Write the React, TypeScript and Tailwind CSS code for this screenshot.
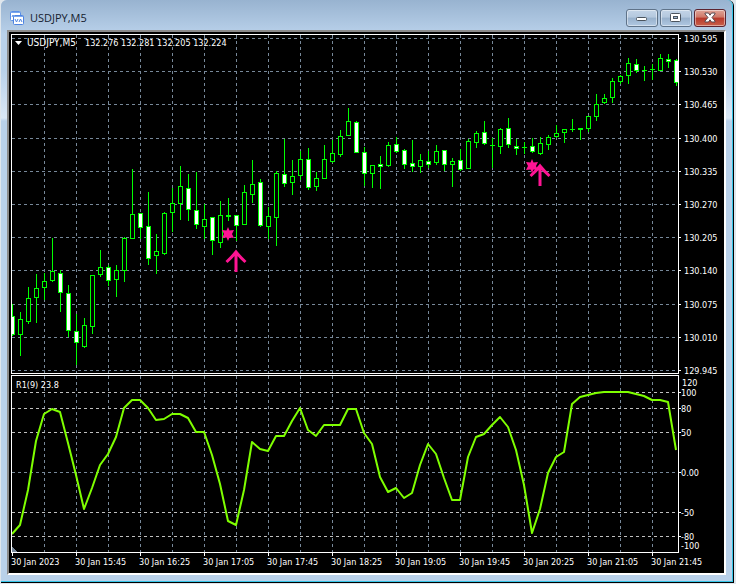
import React from "react"

// [high, low, bodyTop, bodyBottom, bearish]
type Candle = [number, number, number, number, number]

const CANDLES: Candle[] = [
    [304, 336, 316, 335, 1], [312, 356, 319, 335, 0], [287, 324, 298, 322, 0], [274, 323, 288, 298, 0],
    [273, 300, 281, 288, 0], [238, 282, 271, 281, 0], [270, 312, 273, 293, 1], [285, 337, 293, 331, 1],
    [314, 365, 331, 343, 1], [318, 348, 325, 347, 0], [275, 334, 275, 327, 0], [250, 277, 267, 275, 0],
    [265, 286, 267, 281, 1], [265, 297, 270, 280, 0], [237, 282, 238, 271, 0], [169, 239, 214, 239, 0],
    [213, 239, 213, 228, 1], [192, 265, 226, 259, 1], [234, 274, 251, 256, 0], [212, 255, 213, 254, 0],
    [188, 232, 203, 213, 0], [166, 220, 186, 204, 0], [174, 221, 188, 210, 1], [172, 229, 210, 225, 1],
    [204, 239, 219, 227, 0], [217, 255, 217, 241, 1], [201, 248, 215, 243, 0], [198, 221, 215, 217, 0],
    [215, 241, 215, 226, 1], [185, 225, 192, 225, 0], [160, 203, 184, 195, 0], [179, 227, 182, 226, 1],
    [207, 239, 216, 227, 0], [171, 246, 173, 218, 0], [139, 187, 174, 184, 1], [160, 195, 176, 183, 0],
    [151, 180, 159, 176, 0], [148, 190, 159, 188, 1], [172, 191, 178, 187, 0], [145, 179, 159, 179, 0],
    [140, 163, 153, 162, 0], [130, 157, 136, 155, 0], [108, 136, 121, 136, 0], [121, 153, 122, 153, 1],
    [147, 186, 152, 174, 1], [165, 188, 165, 174, 0], [156, 189, 164, 167, 1], [142, 167, 145, 166, 0],
    [137, 153, 144, 152, 1], [149, 169, 150, 165, 1], [140, 172, 163, 167, 1], [154, 173, 160, 167, 0],
    [151, 168, 161, 165, 1], [145, 165, 151, 163, 0], [150, 171, 150, 165, 1], [158, 187, 161, 165, 0],
    [149, 171, 160, 170, 1], [139, 169, 141, 169, 0], [131, 148, 133, 143, 0], [121, 145, 132, 144, 1],
    [138, 168, 145, 146, 0], [128, 154, 129, 147, 0], [118, 148, 128, 145, 1], [139, 155, 146, 149, 1],
    [142, 154, 147, 148, 0], [138, 153, 146, 152, 1], [137, 155, 143, 154, 0], [135, 150, 137, 145, 0],
    [125, 138, 133, 137, 0], [129, 143, 129, 133, 0], [119, 132, 129, 130, 0], [128, 140, 128, 130, 0],
    [116, 132, 116, 129, 0], [94, 121, 104, 117, 0], [94, 104, 98, 103, 0], [78, 103, 81, 98, 0],
    [75, 84, 76, 82, 0], [58, 84, 63, 76, 0], [59, 73, 64, 71, 1], [66, 81, 70, 71, 0],
    [64, 80, 69, 70, 0], [54, 71, 58, 71, 0], [54, 68, 59, 62, 1], [59, 86, 60, 83, 1],
]

const INDICATOR = [
    534, 525, 490, 441, 414, 409, 412, 443, 475, 509, 488, 465, 454, 437, 408, 400, 400, 408, 420, 419, 414,
    414, 418, 432, 432, 455, 484, 521, 525, 490, 442, 449, 451, 436, 436, 421, 408, 430, 436, 425, 425, 425,
    409, 409, 433, 444, 477, 492, 488, 498, 493, 465, 444, 454, 478, 500, 500, 457, 437, 434, 425, 417, 427,
    450, 485, 533, 509, 473, 457, 452, 404, 397, 395, 393, 392, 392, 392, 392, 394, 396, 400, 400, 402, 450,
]

const PRICES = [
    { y: 38, label: "130.595" },
    { y: 71, label: "130.530" },
    { y: 104, label: "130.465" },
    { y: 138, label: "130.400" },
    { y: 171, label: "130.335" },
    { y: 204, label: "130.270" },
    { y: 237, label: "130.205" },
    { y: 270, label: "130.140" },
    { y: 304, label: "130.075" },
    { y: 337, label: "130.010" },
    { y: 370, label: "129.945" },
]

const LEVELS = [
    { y: 392, label: "100" },
    { y: 408, label: "80" },
    { y: 432, label: "50" },
    { y: 472, label: "0.00" },
    { y: 512, label: "-50" },
    { y: 536, label: "-80" },
]

const TIMES = [
    "30 Jan 2023", "30 Jan 15:45", "30 Jan 16:25", "30 Jan 17:05", "30 Jan 17:45", "30 Jan 18:25",
    "30 Jan 19:05", "30 Jan 19:45", "30 Jan 20:25", "30 Jan 21:05", "30 Jan 21:45",
]

const COLUMNS = Array.from({ length: 20 }, (_, i) => 44 + i * 32)

const barX = (i: number) => 12 + i * 8

const labelClass = "fill-white text-[9px] font-['DejaVu_Sans_Condensed','DejaVu_Sans',sans-serif]"

export default function App() {
    return (
        <div className="bg-[#dfe6ec] pl-px pr-0.5 pb-px font-['Open_Sans',sans-serif]">
            <main className="rounded-t-md border-r border-b border-black bg-[#b9d1ea]">
                <div className="rounded-t-md border-r border-b border-[#35c5e8] bg-[linear-gradient(180deg,#98b3d0_0px,#b9d1ea_34px,#b9d1ea_70px,#dbe8f6_118px,#b9d1ea_121px)] pl-1.5 pr-1.5 pb-1.5">
                    <TitleBar />
                    <div className="border-2 border-t-[#8b8b8b] border-l-[#8b8b8b] border-r-white border-b-white bg-black">
                        <PriceChart />
                        <IndicatorChart />
                    </div>
                </div>
            </main>
        </div>
    )
}

function TitleBar() {
    return (
        <header className="flex h-[30px] items-center justify-between pt-1.5">
            <div className="flex items-center gap-1.5 pl-[3px]">
                <ChartIcon />
                <h1 className="text-[11px] leading-4 text-[#15202e]">USDJPY,M5</h1>
            </div>
            <div className="flex gap-0.5">
                <WindowButton label="Minimize">
                    <rect x="10.5" y="8.5" width="10" height="3" rx="1" fill="#fff" stroke="#4b545e" />
                </WindowButton>
                <WindowButton label="Maximize">
                    <rect x="10.5" y="4.5" width="10" height="8" rx="1" fill="#fff" stroke="#4b545e" />
                    <rect x="13.5" y="7.5" width="4" height="2" fill="#9fb6d0" stroke="#4b545e" />
                </WindowButton>
                <WindowButton label="Close" danger>
                    <path d="M11 4h3.500l1.500 2.200 1.500-2.200h3.500v1l-3 3.500 3 3.500v1h-3.500l-1.500-2.200-1.500 2.200h-3.500v-1l3-3.500-3-3.500z" fill="#fff" stroke="#5a4a50" />
                </WindowButton>
            </div>
        </header>
    )
}

interface WindowButtonProps {
    label: string
    danger?: boolean
    children: React.ReactNode
}

function WindowButton({ label, danger, children }: WindowButtonProps) {
    const tone = danger
        ? "border-[#5c2430] bg-[linear-gradient(180deg,#e0a598_0%,#cf7767_45%,#b8382a_50%,#c9604a_100%)]"
        : "border-[#5f7389] bg-[linear-gradient(180deg,#c3d4e7_0%,#b4c8de_45%,#98b1cc_50%,#b0c8e2_100%)]"
    return (
        <button
            type="button"
            aria-label={label}
            className={`h-[18px] w-8 rounded-[3px] border shadow-[inset_0_0_0_1px_rgba(255,255,255,0.45)] ${tone}`}
        >
            <svg viewBox="1 1 30 16" className="block h-4 w-[30px]">
                {children}
            </svg>
        </button>
    )
}

function ChartIcon() {
    return (
        <svg viewBox="0 0 14 14" className="h-3.5 w-3.5" fill="none">
            <rect x=".5" y=".5" width="10" height="9" rx="1" fill="#fff" stroke="#5a8fe6" />
            <path d="M1 1.500h9" stroke="#79a6ee" />
            <path d="M2 6l1-2 1 2" stroke="#5a8fe6" />
            <rect x="3.500" y="4.500" width="10" height="9" rx="1" fill="#fff" stroke="#4d83e0" />
            <path d="M4 5.500h9" stroke="#79a6ee" />
            <path d="M5 8l1.500 3 1.500-3M9 11l1.500-3 1.500 3" stroke="#4d83e0" />
        </svg>
    )
}

function PriceChart() {
    return (
        <svg viewBox="9 32 715 342" className="block w-full overflow-visible" role="img" aria-label="USDJPY,M5 price">
            <g shapeRendering="crispEdges">
                <g stroke="#778899" strokeDasharray="3 3">
                    {PRICES.map(({ y }) => (
                        <path key={y} d={`M12 ${y + 0.5}H678`} />
                    ))}
                    {COLUMNS.map((x) => (
                        <path key={x} d={`M${x + 0.5} 35V373`} />
                    ))}
                </g>
                {CANDLES.map((candle, i) => (
                    <CandleBar key={i} x={barX(i)} candle={candle} />
                ))}
                <rect x="9" y="35" width="2" height="338" fill="#000" />
                <rect x="679" y="35" width="3" height="338" fill="#000" />
                <path d="M11.500 34.500H678.500V373.500H11.500z" fill="none" stroke="#fff" />
                {PRICES.map(({ y }) => (
                    <path key={y} d={`M679 ${y + 0.5}h2`} stroke="#fff" />
                ))}
            </g>
            <Star x={228} y={234} />
            <Arrow x={236} y={250} />
            <Star x={532} y={166} />
            <Arrow x={540} y={164} />
            <path d="M15 41h7l-3.500 4z" fill="#fff" />
            <text x="27" y="46" className="fill-white text-[10px] font-['DejaVu_Sans_Condensed','DejaVu_Sans',sans-serif]">USDJPY,M5</text>
            <text x="85" y="46" className={labelClass}>132.276 132.281 132.205 132.224</text>
            {PRICES.map(({ y, label }) => (
                <text key={label} x="684" y={y + 4} className={labelClass}>{label}</text>
            ))}
        </svg>
    )
}

function CandleBar({ x, candle }: { x: number; candle: Candle }) {
    const [high, low, top, bottom, bearish] = candle
    return (
        <g>
            <rect x={x} y={high} width="1" height={low - high} fill="#0f0" />
            <rect x={x - 2} y={top} width="5" height={bottom - top} fill="#0f0" />
            {bottom - top > 2 && (
                <rect x={x - 1} y={top + 1} width="3" height={bottom - top - 2} fill={bearish ? "#fff" : "#000"} />
            )}
        </g>
    )
}

function Star({ x, y }: { x: number; y: number }) {
    return (
        <path
            transform={`translate(${x} ${y})`}
            d="M0-7L1.500-3.500L6-4L4 0L6 4L1.500 3.500L0 7L-1.500 3.500L-6 4L-4 0L-6-4L-1.500-3.500z"
            fill="#ff1493"
        />
    )
}

function Arrow({ x, y }: { x: number; y: number }) {
    return (
        <path
            transform={`translate(${x} ${y})`}
            d="M0 2V22M-9.500 12Q-4 7 0 2Q4 7 9.500 12"
            fill="none"
            stroke="#ff1493"
            strokeWidth="3"
        />
    )
}

function IndicatorChart() {
    const points = INDICATOR.map((y, i) => `${barX(i)},${y}`).join(" ")

    return (
        <svg viewBox="9 374 715 199" className="block w-full" role="img" aria-label="R1(9) indicator">
            <g shapeRendering="crispEdges">
                <g strokeDasharray="3 3">
                    {COLUMNS.map((x) => (
                        <path key={x} d={`M${x + 0.5} 376V552`} stroke="#778899" />
                    ))}
                    {LEVELS.map(({ y }) => (
                        <path key={y} d={`M12 ${y + 0.5}H678`} stroke={y === 472 ? "#778899" : "#c0c0c0"} />
                    ))}
                </g>
                <path d="M12 547l5 5h-5z" fill="#778899" />
            </g>
            <polyline points={points} fill="none" stroke="#7fff00" strokeWidth="2" strokeLinejoin="round" />
            <g shapeRendering="crispEdges" stroke="#fff">
                <path d="M11.500 375.500H678.500V552.500H11.500z" fill="none" />
                {LEVELS.map(({ y }) => (
                    <path key={y} d={`M679 ${y + 0.5}h2`} />
                ))}
                {TIMES.map((time, i) => (
                    <path key={time} d={`M${12.5 + i * 64} 553v3`} />
                ))}
            </g>
            <text x="16" y="388" className={labelClass}>R1(9) 23.8</text>
            <text x="682" y="386" className={labelClass}>120</text>
            {LEVELS.map(({ y, label }) => (
                <text key={label} x="681" y={y + 4} className={labelClass}>{label}</text>
            ))}
            <text x="681" y="549" className={labelClass}>-100</text>
            {TIMES.map((time, i) => (
                <text key={time} x={11 + i * 64} y="565" className={labelClass}>{time}</text>
            ))}
        </svg>
    )
}
